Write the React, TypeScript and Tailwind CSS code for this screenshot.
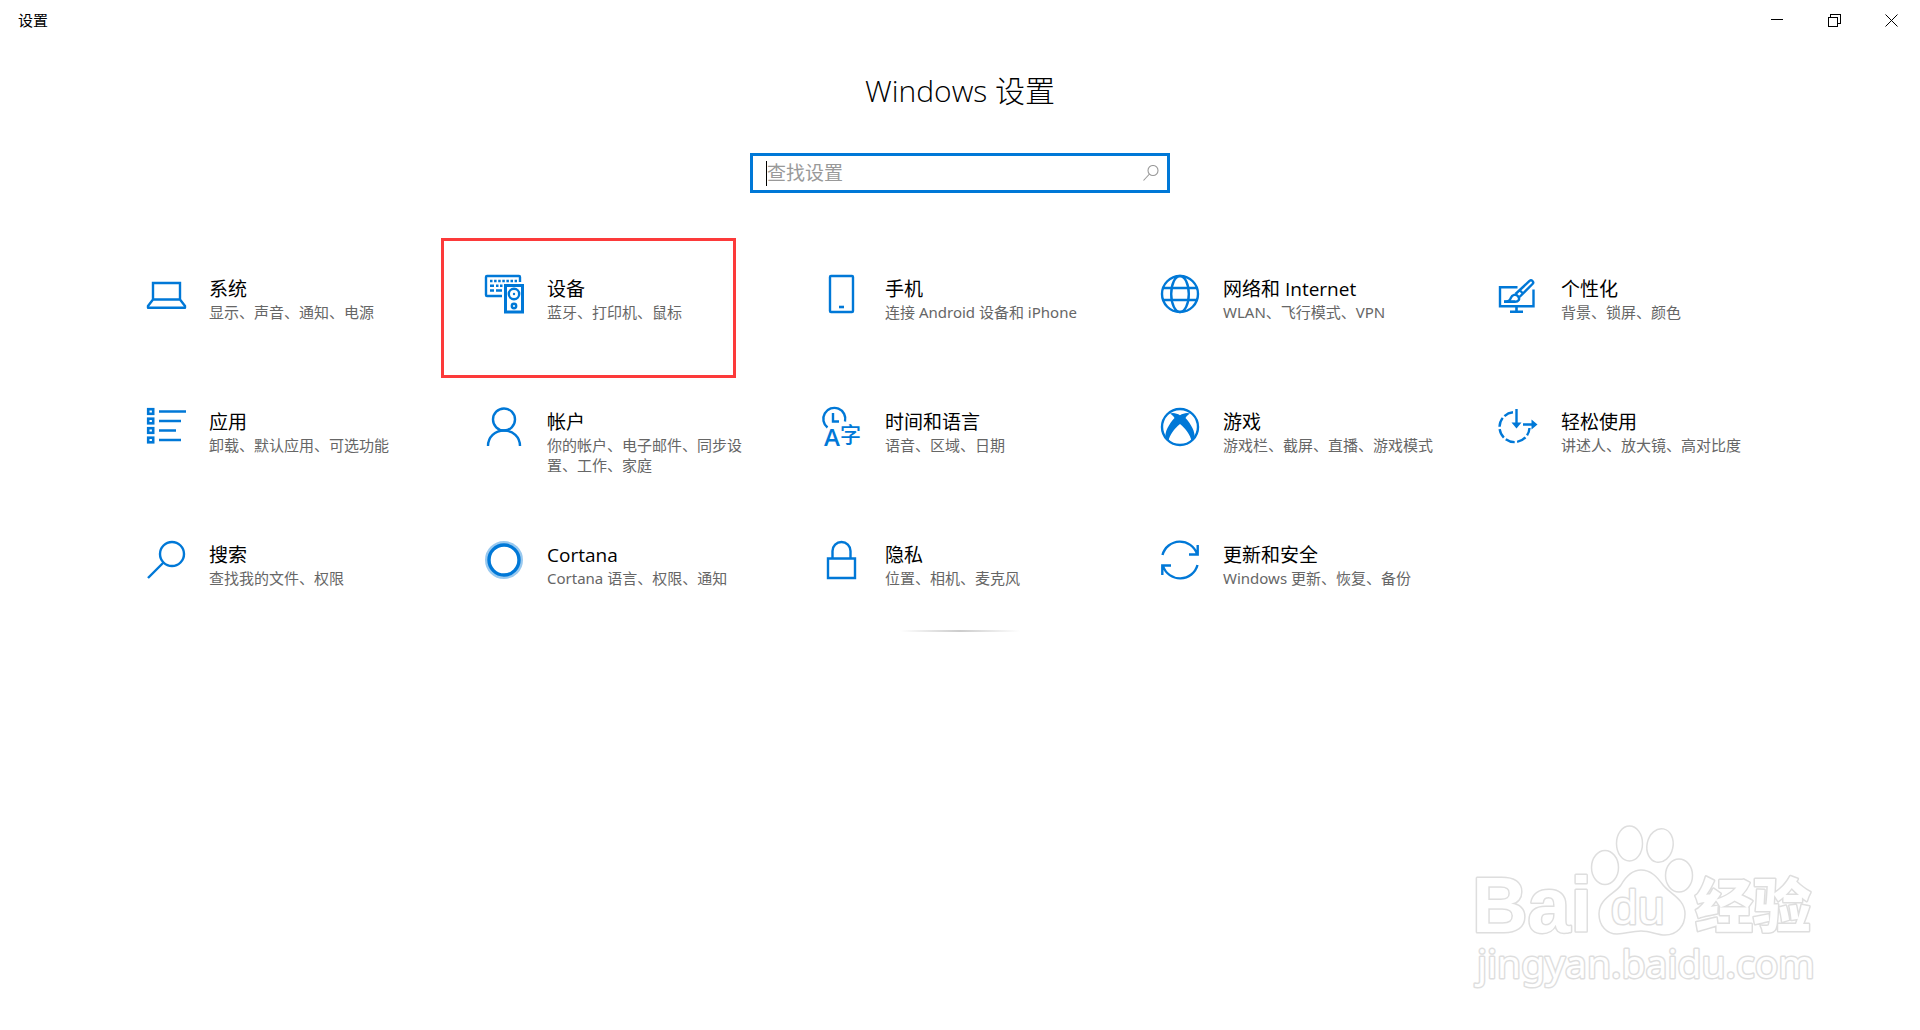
import type { ReactNode } from 'react';

interface Category {
  title: string;
  description: string;
  icon: ReactNode;
  highlighted?: boolean;
}

const categories: Category[] = [
  {
    title: '系统',
    description: '显示、声音、通知、电源',
    icon: (
      <>
        <path d="M6 24V8h27v16" />
        <path d="M6 24.5h27l5 6.5v1.7H1V31z" strokeLinejoin="round" />
      </>
    ),
  },
  {
    title: '设备',
    description: '蓝牙、打印机、鼠标',
    highlighted: true,
    icon: (
      <>
        <path d="M17 21H2a1 1 0 0 1-1-1V2a1 1 0 0 1 1-1h32a1 1 0 0 1 1 1v5" />
        <path d="M5 6h27" strokeDasharray="2.5 1.6" />
        <path d="M5 10.7h4M11 10.7h2.5M15 10.7h2.5M5 15.5h4M11 15.5h6" />
        <path d="M20.5 10.5h17v26.5h-17z" strokeWidth="3" />
        <circle cx="29" cy="19" r="5.2" />
        <circle cx="29" cy="19" r="1.2" fill="currentColor" stroke="none" />
        <circle cx="29" cy="31" r="2.2" />
      </>
    ),
  },
  {
    title: '手机',
    description: '连接 Android 设备和 iPhone',
    icon: (
      <>
        <rect x="7" y="1" width="23" height="36" rx="1" />
        <path d="M16 32h5" strokeWidth="2.6" />
      </>
    ),
  },
  {
    title: '网络和 Internet',
    description: 'WLAN、飞行模式、VPN',
    icon: (
      <>
        <circle cx="19" cy="19" r="18" />
        <ellipse cx="19" cy="19" rx="8.8" ry="18" />
        <path d="M2 13h34M2 25h34" />
      </>
    ),
  },
  {
    title: '个性化',
    description: '背景、锁屏、颜色',
    icon: (
      <>
        <path d="M18.5 12.2H1v19h33.5V14.5" />
        <path d="M17.500 31v5M11 36.700h13" strokeWidth="2.600" />
        <path d="M5 26.700c4.500 0 6-1 7-4 1-3.200 5-4 7-1.500 2.500 3 .5 5.500-3 5.500z" />
        <path d="M16.500 19 30.500 6a2 2 0 0 1 3 3L20.500 22M21 15.500l3 3" />
        <path d="M5 26.700h11" strokeWidth="2.600" />
      </>
    ),
  },
  {
    title: '应用',
    description: '卸载、默认应用、可选功能',
    icon: (
      <>
        <g strokeWidth="2.6">
          <rect x="1.2" y="1.2" width="5" height="4.6" />
          <rect x="1.2" y="10.7" width="5" height="4.6" />
          <rect x="1.2" y="20.2" width="5" height="4.6" />
          <rect x="1.2" y="29.7" width="5" height="4.6" />
        </g>
        <path d="M12 3.5h27M12 13h22M12 22.5h17M12 32h22" />
      </>
    ),
  },
  {
    title: '帐户',
    description: '你的帐户、电子邮件、同步设置、工作、家庭',
    icon: (
      <>
        <circle cx="19" cy="11.5" r="11" />
        <path d="M3 38c0-9 7-15.5 16-15.5S35 29 35 38" />
      </>
    ),
  },
  {
    title: '时间和语言',
    description: '语音、区域、日期',
    icon: (
      <>
        <path d="M4.500 19.500A11 11 0 1 1 22 13.500" />
        <path d="M10 5v8.500h6" />
        <g fill="currentColor" stroke="none">
          <text x="1" y="38" className="font-['Open_Sans'] text-[24px] font-semibold">A</text>
          <text x="17" y="34" className="font-['Noto_Sans_CJK_SC'] text-[21px] font-medium">字</text>
        </g>
      </>
    ),
  },
  {
    title: '游戏',
    description: '游戏栏、截屏、直播、游戏模式',
    icon: (
      <>
        <circle cx="19" cy="19" r="18" />
        <path
          d="M9 5.500c3-1.200 7-.2 10 1.800 3-2 7-3 10-1.800-2 1.200-3.200 2.500-4.500 4.500 5.500 6 10 14 9 20-1 1.800-2 2.800-3 3.200-1-6.200-6-12.700-11.500-17.200C13.500 20.500 8.500 27 7.500 33.200c-1-.4-2-1.400-3-3.200-1-6 3.500-14 9-20C12.200 8 11 6.700 9 5.500z"
          fill="currentColor"
          stroke="none"
        />
      </>
    ),
  },
  {
    title: '轻松使用',
    description: '讲述人、放大镜、高对比度',
    icon: (
      <>
        <path d="M14 4.2A15 15 0 1 0 30.5 20" strokeDasharray="9.5 2.5" />
        <path d="M17.500 1v17M24 16.500h11" />
        <path d="M12.500 14.500h10l-5 6zM32.500 11.500v10l6-5z" fill="currentColor" stroke="none" />
      </>
    ),
  },
  {
    title: '搜索',
    description: '查找我的文件、权限',
    icon: (
      <>
        <circle cx="25" cy="13" r="12" />
        <path d="M16.500 21.500 1 37" />
      </>
    ),
  },
  {
    title: 'Cortana',
    description: 'Cortana 语言、权限、通知',
    icon: (
      <>
        <circle cx="19" cy="19" r="17.5" strokeWidth="3" strokeOpacity="0.4" />
        <circle cx="19" cy="19" r="15" strokeWidth="3.4" />
      </>
    ),
  },
  {
    title: '隐私',
    description: '位置、相机、麦克风',
    icon: (
      <>
        <path d="M5 17.500h27V37H5z" />
        <path d="M9.500 17v-7a9 9 0 0 1 18 0v7" />
      </>
    ),
  },
  {
    title: '更新和安全',
    description: 'Windows 更新、恢复、备份',
    icon: (
      <>
        <path d="M1.500 14A18 18 0 0 1 36 13M36.700 4v9.500H28" />
        <path d="M36.500 24A18 18 0 0 1 2 25M1.300 34v-9.500H10" />
      </>
    ),
  },
];

function WindowButton({ label, children }: { label: string; children: ReactNode }) {
  return (
    <button aria-label={label} className="flex h-10 w-[57px] items-center justify-center hover:bg-gray-200">
      <svg width="13" height="13" viewBox="0 0 13 13" fill="none" stroke="currentColor" shapeRendering="crispEdges">
        {children}
      </svg>
    </button>
  );
}

function TitleBar() {
  return (
    <header className="flex h-10 items-center justify-between pl-[18px]">
      <span className="text-[15px]">设置</span>
      <div className="flex">
        <WindowButton label="最小化">
          <path d="M0 5.5h12" />
        </WindowButton>
        <WindowButton label="还原">
          <path d="M.5 3.5h9v9h-9zM2.5 3V.5h10v9H10" />
        </WindowButton>
        <WindowButton label="关闭">
          <path d="M.5.5l12 12M12.5.5l-12 12" shapeRendering="auto" />
        </WindowButton>
      </div>
    </header>
  );
}

function SearchBox() {
  return (
    <label className="relative mt-[42px] flex h-10 w-[420px] items-center border-3 border-[#0078d7] pr-2 pl-[13px]">
      <span className="h-[25px] w-px bg-black" />
      <input
        type="text"
        aria-label="查找设置"
        placeholder="查找设置"
        className="min-w-0 flex-1 bg-transparent text-[19px] leading-6 outline-none placeholder:text-[#999]"
      />
      <svg width="16" height="16" viewBox="0 0 16 16" fill="none" stroke="#999" strokeWidth="1.1">
        <circle cx="10" cy="5.5" r="5" />
        <path d="M6.5 9 .5 15.5" />
      </svg>
    </label>
  );
}

function CategoryTile({ title, description, icon, highlighted }: Category) {
  return (
    <a href="#" className="relative flex gap-6 px-8 pt-8">
      <svg
        width="38"
        height="38"
        viewBox="0 0 38 38"
        fill="none"
        stroke="currentColor"
        strokeWidth="2.4"
        className="shrink-0 overflow-visible text-[#0078d7]"
      >
        {icon}
      </svg>
      <div className="pt-px">
        <h2 className="font-['Open_Sans','Noto_Sans_CJK_SC',sans-serif] text-[19px] leading-[26px]">{title}</h2>
        <p className="text-[15px] leading-5 text-[#666]">{description}</p>
      </div>
      {highlighted && (
        <span className="pointer-events-none absolute -top-[5px] -left-3 h-[140px] w-[295px] border-3 border-[#fc3a3a]" />
      )}
    </a>
  );
}

function Watermark() {
  return (
    <svg
      width="400"
      height="190"
      viewBox="0 0 400 190"
      fill="#fff"
      stroke="#dedede"
      strokeWidth="2"
      className="pointer-events-none absolute right-[70px] bottom-[30px]"
    >
      <g strokeWidth="1.5">
        <ellipse cx="155" cy="57.5" rx="13.5" ry="17" />
        <ellipse cx="179.5" cy="33.5" rx="13" ry="17.5" />
        <ellipse cx="210" cy="35.5" rx="13" ry="17" transform="rotate(12 210 35.5)" />
        <ellipse cx="229" cy="65.5" rx="13.5" ry="16.5" />
        <path d="M191 60c-10 0-16 8-20 15-6 9-22 13-22 29 0 12 8 20 18 20 9 0 14-3 24-3s16 4 24 4c12 0 20-9 20-21 0-15-15-20-22-29-6-8-12-15-22-15z" />
      </g>
      <g strokeWidth="3" strokeLinejoin="round" paintOrder="stroke">
        <text x="22" y="122" className="font-['Liberation_Sans'] text-[77px] font-bold">Bai</text>
        <text x="161" y="114" className="font-['Liberation_Sans'] text-[48px]">du</text>
        <text x="245" y="117" className="font-['Noto_Sans_CJK_SC'] text-[58px] font-black">经验</text>
        <text x="27" y="168" className="font-['Noto_Sans'] text-[39px]">jingyan.baidu.com</text>
      </g>
    </svg>
  );
}

export default function App() {
  return (
    <div className="relative min-h-screen bg-white font-['Noto_Sans','Noto_Sans_CJK_SC',sans-serif] text-black">
      <TitleBar />
      <main className="flex flex-col items-center">
        <h1 className="mt-[31px] font-['Open_Sans','Noto_Sans_CJK_SC',sans-serif] text-[30px] leading-10 font-light">
          Windows 设置
        </h1>
        <SearchBox />
        <nav className="mt-[50px] grid w-full auto-rows-[133px] grid-cols-5 px-[115px]">
          {categories.map((category) => (
            <CategoryTile key={category.title} {...category} />
          ))}
        </nav>
        <div className="-mt-3 h-[2px] w-[120px] bg-linear-to-r from-transparent via-[#ccc] to-transparent" />
      </main>
      <Watermark />
    </div>
  );
}
